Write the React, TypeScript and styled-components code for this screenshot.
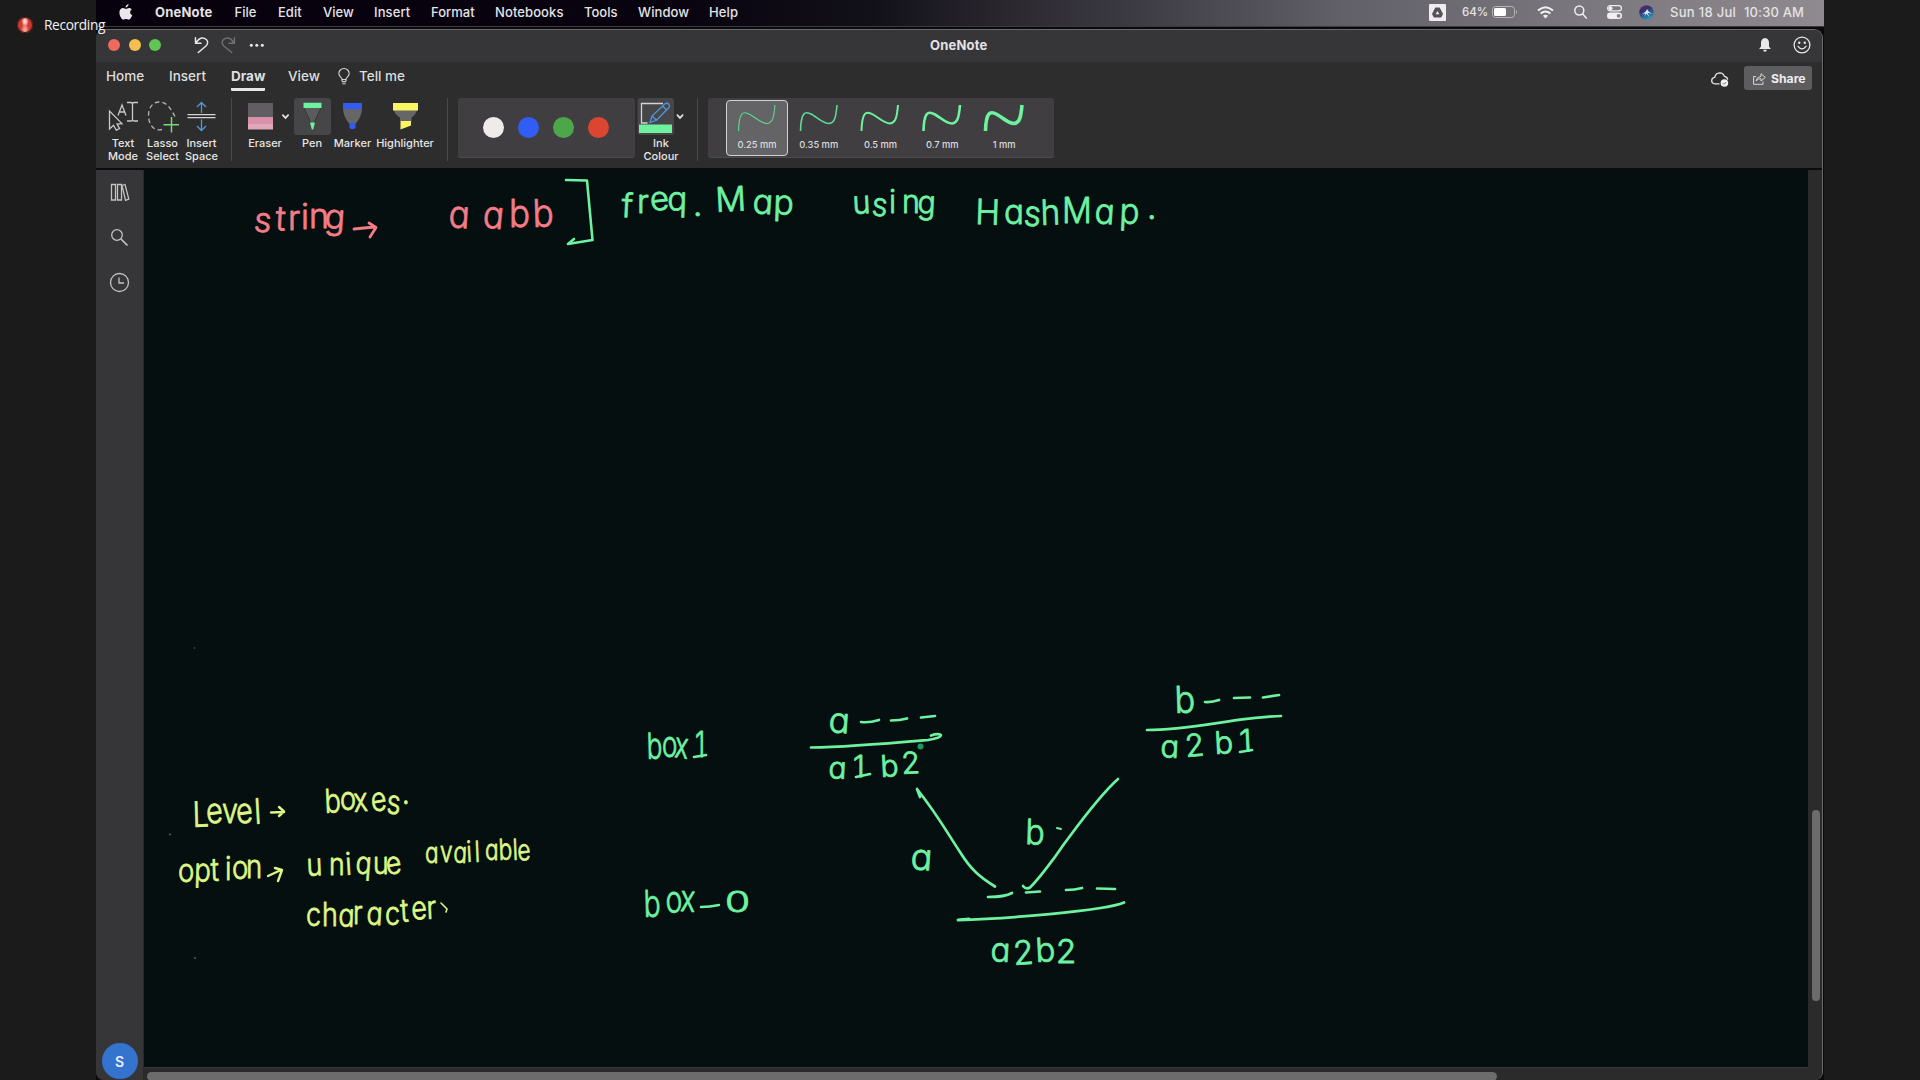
import React from "react";
import styled, { createGlobalStyle, css } from "styled-components";

const UI = `Inter, "Liberation Sans", sans-serif`;
const GREEN = "#6df2a2";
const RED = "#f57c86";
const YELLOW = "#dcf784";

const Global = createGlobalStyle`
  html, body { margin: 0; background: #1b1b1b; }
  *, *::before, *::after { box-sizing: border-box; }
`;

const Screen = styled.div`
  width: 1920px; height: 1080px; overflow: hidden;
  display: grid; grid-template-columns: 96px 1728px 96px;
  background: #1b1b1b; font-family: ${UI}; color: #e4e3e5;
`;
const Recording = styled.div`
  display: flex; align-items: center; gap: 10px; height: 20px;
  margin: 15px 0 0 16px; white-space: nowrap; position: relative; z-index: 2;
  font: 13.7px/18px "Open Sans", "Noto Sans", sans-serif; color: #f2f2f2;
`;
const RecordLabel = styled.span`margin: -1px 0 0 -1px; letter-spacing: -0.35px;`;
const RecordDot = styled.span`
  width: 16px; height: 16px; margin: 0 2px 0 1px; border-radius: 50%; flex: none;
  background: radial-gradient(ellipse at 50% 28%, #ffd3cd 0 10%, transparent 32%),
    radial-gradient(ellipse at 50% 80%, #f7a59c 0 8%, transparent 36%), #cf3a30;
  box-shadow: 0 0 0 1px #4a1b18 inset;
`;
const Desktop = styled.main`
  display: flex; flex-direction: column; height: 1080px; background: #0a090c;
`;
const MenuBar = styled.header`
  height: 26px; flex: none; display: flex; align-items: center;
  padding: 0 0 2px 22px; margin-bottom: 3px;
  background: linear-gradient(90deg, #06010d 0, #08030f 33%, #121019 45%, #2b2830 53%, #3c3a43 60%, #615f68 72%, #77747b 84%, #8f8a8f 100%);
  box-shadow: 0 1px 0 #3b3a3e;
`;
const Text = styled.span<{ $w: number; $ml?: number; $size?: number; $bold?: boolean; $ls?: number }>`
  display: block; flex: none; white-space: nowrap;
  width: ${p => p.$w}px; margin-left: ${p => p.$ml ?? 0}px;
  font-size: ${p => p.$size ?? 13}px; line-height: 18px;
  font-weight: ${p => (p.$bold ? 700 : 500)};
  letter-spacing: ${p => p.$ls ?? 0}px;
`;
const Glyph = styled.svg<{ $ml?: number; $mt?: number }>`
  display: block; flex: none; fill: none; overflow: visible;
  margin-left: ${p => p.$ml ?? 0}px; margin-top: ${p => p.$mt ?? 0}px;
`;
const Window = styled.section`
  flex: 1; min-height: 0; display: flex; flex-direction: column; width: 1727px;
  border: 1px solid #6b6a6d; border-width: 1px 1px 0 0; border-radius: 9px 9px 8px 8px;
  background: #2d2d2d; overflow: hidden;
`;
const TitleBar = styled.div`
  height: 32px; flex: none; display: grid; grid-template-columns: 1fr 58px 1fr; align-items: center;
  background: #363538; padding-bottom: 2px;
`;
const TitleSide = styled.div<{ $end?: boolean }>`
  display: flex; align-items: center;
  ${p => p.$end ? css`justify-content: flex-end; padding-right: 11px;` : css`padding-left: 12px;`}
`;
const Light = styled.span<{ $c: string }>`
  width: 12px; height: 12px; margin-right: 8.5px; border-radius: 50%; background: ${p => p.$c};
`;
const Tabs = styled.nav`
  height: 34px; flex: none; display: flex; align-items: flex-start; padding: 4px 10px 0 11px;
`;
const Tab = styled.div<{ $w: number; $ml?: number; $active?: boolean; $ls?: number }>`
  width: ${p => p.$w}px; margin-left: ${p => p.$ml ?? 0}px; height: 23px; padding-top: 1px; white-space: nowrap;
  font-size: 13.5px; line-height: 18px; letter-spacing: ${p => p.$ls ?? 0}px;
  font-weight: ${p => (p.$active ? 700 : 500)}; color: #dededf;
  ${p => p.$active && css`border-bottom: 3px solid #e8e8e8; border-radius: 1px; height: 25px;`}
`;
const Spacer = styled.div`flex: 1;`;
const Share = styled.button`
  width: 68px; height: 24px; margin-left: 15px; padding: 0 0 0 9px; border: 0; border-radius: 3px;
  display: flex; align-items: center; background: #5d5c5f; color: #ededee;
  font: 700 12.2px ${UI}; gap: 5px;
`;
const Ribbon = styled.div`
  height: 74px; flex: none; display: flex; align-items: flex-start; padding: 2px 0 0 7px;
  border-bottom: 2px solid #0b0b0c; 
`;
const Tool = styled.div<{ $w: number; $ml?: number }>`
  width: ${p => p.$w}px; margin-left: ${p => p.$ml ?? 0}px; flex: none;
  display: flex; flex-direction: column; align-items: center;
  font-size: 11px; font-weight: 500; line-height: 12.5px; text-align: center; white-space: pre; color: #e6e6e7;
`;
const ToolIcon = styled.div<{ $on?: boolean }>`
  height: 37px; margin-bottom: 2px; border-radius: 3px; display: flex; justify-content: center;
  background: ${p => (p.$on ? "#464548" : "transparent")};
`;
const Divider = styled.div<{ $ml: number }>`
  width: 1px; height: 63px; flex: none; margin-left: ${p => p.$ml}px; background: #4a4a4b;
`;
const Panel = styled.div<{ $w: number; $ml: number }>`
  width: ${p => p.$w}px; height: 60px; flex: none; margin-left: ${p => p.$ml}px;
  display: flex; align-items: center; border-radius: 3px; background: #403e41; border-bottom: 1px solid #4b4a4c;
`;
const Swatch = styled.span<{ $c: string }>`
  width: 21px; height: 21px; margin-right: 14px; border-radius: 50%; background: ${p => p.$c};
`;
const Nib = styled.div<{ $on?: boolean }>`
  width: 61.8px; height: 56px; display: flex; flex-direction: column; align-items: center;
  border-radius: 4px; border: 1.5px solid ${p => (p.$on ? "#d2d2d2" : "transparent")};
  background: ${p => (p.$on ? "#646366" : "transparent")};
  font-size: 9.3px; font-weight: 500; line-height: 14px; padding-top: 3px; color: #dcdcdd;
`;
const Body = styled.div`
  flex: 1; min-height: 0; display: grid; grid-template-columns: 48px 1664px 1fr;
`;
const Rail = styled.aside`
  display: flex; flex-direction: column; align-items: center; padding: 13px 0 2px; background: #363537;
  border-right: 1px solid #29292b;
`;
const Avatar = styled.div`
  width: 36px; height: 36px; border-radius: 50%; background: #3474cf; color: #eaf1fb;
  display: grid; place-items: center; font-size: 14px; font-weight: 600; margin-top: auto;
`;
const PageColumn = styled.div`display: flex; flex-direction: column; min-width: 0;`;
const Page = styled.div`height: 897px; background: #060f10; overflow: hidden;`;
const HTrack = styled.div`
  flex: 1; padding: 4px 0 0 3px; border-top: 1px solid #37383a; background: #2b2b2c; overflow: hidden;
`;
const HThumb = styled.div`width: 1350px; height: 9px; border-radius: 5px; background: #6c6c6c;`;
const VTrack = styled.div`padding: 640px 0 0 4px; background: #2b2b2c;`;
const VThumb = styled.div`width: 8px; height: 191px; border-radius: 4px; background: #6c6c6c;`;

const InkText = styled.text`
  font-family: ${UI}; font-weight: 300; font-feature-settings: "cv11"; stroke-width: 0.8px;
`;

/* x: left edge of every letter; sx: how far the hand narrows or widens the letters; r: tilt of every letter */
type Word = { t: string; x: number[]; y: number | number[]; s: number; c: string; sx?: number; r?: number[] };

const words: Word[] = [
  { t: "string", x: [253, 275, 288, 301, 309, 324], y: [231, 230, 230, 229, 228, 228], s: 34, c: RED, r: [6, 3, 0, 0, 0, 4] },
  { t: "aabb", x: [448, 482, 509, 533], y: 227, s: 38, c: RED, sx: 0.92, r: [4, 6, 0, -2] },
  { t: "freq.", x: [621, 637, 651, 667, 693], y: [217, 213, 211, 210, 216], s: 33, c: GREEN, r: [3, 0, -6, 2, 0] },
  { t: "Map", x: [716, 752, 773], y: [212, 213, 214], s: 34, c: GREEN, r: [-3, 4, 2] },
  { t: "using", x: [853, 871, 889, 902, 917], y: [214, 215, 213, 213, 213], s: 32, c: GREEN, sx: 0.95, r: [-3, 6, 0, 0, 3] },
  { t: "HashMap.", x: [975, 1004, 1023, 1041, 1062, 1094, 1119, 1147], y: [224, 224, 225, 225, 223, 223, 223, 219], s: 35, c: GREEN, sx: 0.95, r: [2, 0, 5, -2, 0, 4, 3, 0] },
  { t: "Level", x: [193, 207, 222, 237, 255], y: [827, 824, 823, 824, 824], s: 35, c: YELLOW, sx: 0.82, r: [-2, -6, 0, -6, -4] },
  { t: "boxes.", x: [325, 340, 354, 372, 386, 402], y: [813, 810, 812, 812, 813, 804], s: 33, c: YELLOW, sx: 0.82, r: [-3, 0, -4, -8, 5, 0] },
  { t: "option", x: [178, 194, 211, 225, 232, 246], y: [882, 881, 881, 880, 879, 878], s: 32, c: YELLOW, sx: 0.86, r: [0, 2, -2, 0, 0, 0] },
  { t: "unique", x: [307, 329, 346, 355, 373, 387], y: [876, 875, 875, 873, 874, 875], s: 31, c: YELLOW, sx: 0.86, r: [-3, 0, -4, 5, 0, -8] },
  { t: "available", x: [425, 440, 453, 467, 475, 485, 499, 513, 518], y: [863, 862, 862, 862, 862, 860, 860, 860, 861], s: 29, c: YELLOW, sx: 0.78, r: [0, 0, 4, -4, -3, 0, -3, -3, -5] },
  { t: "character", x: [306, 322, 338, 353, 366, 385, 401, 412, 427], y: [926, 926, 926, 924, 924, 925, 922, 920, 919], s: 32, c: YELLOW, sx: 0.84, r: [0, 0, 3, 0, 4, 0, -4, -5, -3] },
  { t: "box1", x: [647, 662, 674, 695], y: [759, 757, 757, 757], s: 36, c: GREEN, sx: 0.72, r: [-2, 0, 6, 0] },
  { t: "a", x: [828], y: 732, s: 35, c: GREEN, r: [4] },
  { t: "a1b2", x: [828, 853, 881, 902], y: [778, 777, 777, 774], s: 30, c: GREEN, r: [3, 0, -3, -3] },
  { t: "a", x: [910], y: 869, s: 36, c: GREEN, r: [4] },
  { t: "box", x: [644, 666, 680], y: [917, 913, 911], s: 37, c: GREEN, sx: 0.76, r: [-2, -3, 3] },
  { t: "0", x: [725], y: 912.5, s: 28, c: GREEN, sx: 1.45 },
  { t: "b", x: [1175], y: 713, s: 37, c: GREEN, sx: 0.92, r: [-2] },
  { t: "a2b1", x: [1160, 1186, 1215, 1240], y: [757, 757, 754, 752], s: 31, c: GREEN, r: [3, -5, -3, -3] },
  { t: "b", x: [1025], y: 844, s: 35, c: GREEN, sx: 0.92, r: [2] },
  { t: "a2b2", x: [990, 1014, 1036, 1056], y: [961, 965, 962, 963], s: 33, c: GREEN, r: [3, -4, -3, 0] },
];

const strokes: { d: string; c: string; w?: number }[] = [
  { d: "M354 229 L374 227 M369 223 L376 227.5 L370 237", c: RED, w: 2.8 },
  { d: "M566 180 L587 180.5 L592.5 240 L568 244 L574 239", c: GREEN, w: 2.6 },
  { d: "M271 812.5 L284 812 M279 807 L284 811.5 L279 816", c: YELLOW, w: 2.4 },
  { d: "M268 876 L281 870 M275 868 L282 870 L278 881", c: YELLOW, w: 2.4 },
  { d: "M441 903 L447 909 L446 912", c: YELLOW, w: 1.6 },
  { d: "M694 757 L706 755 M856 777 L870 774 M1240 752 L1252 750", c: GREEN },
  { d: "M861 722 Q869 723 879 720 M891 720.5 Q900 720.5 907 718.5 M921 717.5 L935 716", c: GREEN },
  { d: "M811 747.5 C850 747 905 742 928 740 Q941 738 941 735 Q938 733 931 735.5", c: GREEN },
  { d: "M917 789 C937 814 948 834 960 852 C971 870 981 878 995 886.5 M917 789 L920 797", c: GREEN },
  { d: "M1118 779 C1098 797 1076 828 1064 844 C1052 862 1036 882 1030 887.5 Q1026 890 1023 886", c: GREEN },
  { d: "M1205 702 Q1212 702.5 1219 700 M1234 698 L1250 697.5 M1263 697.5 L1279 695", c: GREEN },
  { d: "M1147 730 C1190 730 1240 717 1281 716", c: GREEN },
  { d: "M1057 828 L1061 829", c: GREEN, w: 2 },
  { d: "M988 897 Q1005 897 1012 893 M1026 892.5 L1040 891.5 M1066 890 Q1075 890 1082 888 M1097 888.5 L1115 889", c: GREEN },
  { d: "M958 920 C1000 919 1105 911 1124 902.5 M958 920 L969 919", c: GREEN, w: 2.8 },
  { d: "M701 907 Q710 907 719 905", c: GREEN, w: 2.5 },
];

const Ink = () => (
  <Glyph width={1664} height={897} viewBox="144 170 1664 897" strokeLinecap="round" strokeLinejoin="round">
    {strokes.map((s, i) => <path key={i} d={s.d} stroke={s.c} strokeWidth={s.w ?? 2.7} />)}
    {words.map(({ t, x, y, s, c, sx = 1, r }, i) => (
      <InkText
        key={i}
        transform={`scale(${sx} 1)`}
        x={x.map(v => (v / sx).toFixed(2)).join(" ")}
        y={Array.isArray(y) ? y.join(" ") : y}
        rotate={r?.join(" ")}
        fontSize={s}
        fill={c}
        stroke={c}
      >
        {t}
      </InkText>
    ))}
    <circle cx={920.5} cy={746.5} r={3} fill="#159a5f" />
    <g fill="#536050"><circle cx={170} cy={834.5} r={1} /><circle cx={195} cy={958} r={1} /><circle cx={194.5} cy={648} r={0.8} /></g>
  </Glyph>
);

const Chevron = ({ x }: { x: number }) => (
  <path d={`M${x - 2.6} 115.2 l2.6 2.8 l2.6 -2.8`} stroke="#e4e4e4" strokeWidth={1.8} strokeLinecap="round" />
);

const menus: [string, number, number, number?][] = [
  ["File", 22, 21.5], ["Edit", 23, 21.5], ["View", 29, 22], ["Insert", 35, 22, 0.1], ["Format", 43, 22],
  ["Notebooks", 68, 21, 0.1], ["Tools", 33, 21], ["Window", 49, 21, 0.1], ["Help", 30, 22, 0.1],
];
const nibs: [string, number][] = [["0.25 mm", 1.1], ["0.35 mm", 1.6], ["0.5 mm", 2], ["0.7 mm", 2.6], ["1 mm", 3.6]];

export default function App() {
  return (
    <Screen>
      <Global />
      <Recording><RecordDot /><RecordLabel>Recording</RecordLabel></Recording>
      <Desktop>
        <MenuBar>
          <Glyph $ml={0.5} width={14} height={16} viewBox="0 0 14 16">
            <path fill="#e9e6ec" d="M9.6 0 C9.7 1.6 8.2 3.5 6.6 3.5 C6.5 1.8 8 .2 9.6 0 Z M12.7 5.4 C10.4 6.9 10.7 10 13.3 11.1 C12.5 13.4 11 15.7 9.6 15.7 C8.6 15.7 8.2 15 7 15 C5.8 15 5.3 15.7 4.4 15.7 C2.7 15.6 .4 12 .4 8.6 C.4 5.8 2.1 4.1 4 4.1 C5.2 4.1 6.2 4.9 7 4.9 C7.8 4.9 8.9 4 10.2 4 C11.2 4 12.1 4.6 12.7 5.4 Z" />
          </Glyph>
          <Text $w={58} $ml={22.5} $bold $ls={0.2}>OneNote</Text>
          {menus.map(([t, w, ml, ls]) => <Text key={t} $w={w} $ml={ml} $ls={ls}>{t}</Text>)}
          <Spacer />
          <Glyph width={17} height={17} viewBox="0 0 17 17">
            <rect width={17} height={17} rx={1} fill="#efedf0" />
            <path d="M6.3 3.5 H10.7 L14 10 L12.2 13.5 H4.8 L3 10 Z" fill="#55525a" />
            <path d="M8.5 7 L10.4 10.3 H6.6 Z" fill="#efedf0" />
          </Glyph>
          <Text $w={26} $ml={16} $size={11.5}>64%</Text>
          <Glyph $ml={4} width={26} height={12} viewBox="0 0 26 12">
            <rect x={.5} y={.5} width={22} height={11} rx={3} stroke="#b6b2b8" />
            <rect x={2} y={2} width={12} height={8} rx={1.5} fill="#fff" /><path d="M24 4 Q26 6 24 8 Z" fill="#b6b2b8" />
          </Glyph>
          <Glyph $ml={19} width={17} height={13} viewBox="0 0 17 13" stroke="#f3f1f4" strokeWidth={2}>
            <path d="M1 4.6 Q8.5 -2 16 4.6 M3.6 7.6 Q8.5 3.4 13.4 7.6" /><path d="M8.5 12.5 L5.9 9.7 Q8.5 7.7 11.1 9.7 Z" fill="#f3f1f4" stroke="none" />
          </Glyph>
          <Glyph $ml={20} width={13} height={14} viewBox="0 0 13 14" stroke="#f0eef1" strokeWidth={1.5} strokeLinecap="round">
            <circle cx={5.3} cy={5.5} r={4.5} /><path d="M8.7 9 L12.3 13" />
          </Glyph>
          <Glyph $ml={20} width={15} height={14} viewBox="0 0 15 14">
            <rect x={.6} y={.6} width={13.8} height={5.2} rx={2.6} stroke="#f0eef1" strokeWidth={1.2} /><circle cx={3.5} cy={3.2} r={2} fill="#f0eef1" />
            <rect y={7.6} width={15} height={6.4} rx={3.2} fill="#f0eef1" /><circle cx={11.6} cy={10.8} r={1.9} fill="#85818a" />
          </Glyph>
          <Glyph $ml={17} width={15} height={15} viewBox="0 0 15 15">
            <defs><linearGradient id="siri" x1="0" y1="0" x2=".5" y2="1"><stop offset="0" stopColor="#6b2a72" /><stop offset=".4" stopColor="#3b2d6d" /><stop offset="1" stopColor="#2592b8" /></linearGradient></defs>
            <circle cx={7.5} cy={7.5} r={7.3} fill="url(#siri)" />
            <path d="M2.5 9 Q7 7.5 8 4 Q9 7 13 8.6 Q10 8.6 8.6 7.8 L10.4 12 L7.4 8.4 L5.5 11.5 L6.2 8.4 Z" fill="#dcecff" />
          </Glyph>
          <Text $w={66} $ml={16} $ls={.3}>Sun 18 Jul</Text>
          <Text $w={60} $ml={8} $ls={.15}>10:30 AM</Text>
          <Text $w={20}> </Text>
        </MenuBar>
        <Window>
          <TitleBar>
            <TitleSide>
              <Light $c="#ed6a5f" /><Light $c="#f5bf4f" /><Light $c="#61c554" />
              <Glyph $ml={24.5} width={70} height={16} viewBox="194 37 70 16" strokeLinecap="round" strokeLinejoin="round" strokeWidth={1.5}>
                <path stroke="#e8e8e8" d="M195.5 37.7 V43.3 H201 M195.8 43 C199 38 202 37.3 204.5 38.4 C208.3 40.3 208.6 43.5 206 46 L198.3 52.5" />
                <path stroke="#6f6e71" d="M234.4 37.7 V43.3 H229 M234 43 C231 38 228 37.3 225.3 38.4 C221.5 40.3 221.2 43.5 223.8 46 L231.8 52.5" />
                <g fill="#e8e8e8"><circle cx={251.3} cy={45.3} r={1.5} /><circle cx={256.8} cy={45.3} r={1.5} /><circle cx={262.3} cy={45.3} r={1.5} /></g>
              </Glyph>
            </TitleSide>
            <Text $w={59} $bold $ls={0.2}>OneNote</Text>
            <TitleSide $end>
              <Glyph width={12} height={14} viewBox="0 0 12 14"><path fill="#e8e8e8" d="M6 0 Q10 .4 10 5 V8.5 L11.6 10.5 V11 H.4 V10.5 L2 8.5 V5 Q2 .4 6 0 Z M4 11.8 H8 Q7.5 13.8 6 13.8 Q4.5 13.8 4 11.8 Z" /></Glyph>
              <Glyph $ml={22} width={18} height={18} viewBox="0 0 18 18" stroke="#e8e8e8" strokeWidth={1.3} strokeLinecap="round">
                <circle cx={9} cy={9} r={7.9} /><path d="M5 10.3 Q9 15.3 13 10.3" /><g fill="#e8e8e8" stroke="none"><circle cx={6.2} cy={6.8} r={1.2} /><circle cx={11.8} cy={6.8} r={1.2} /></g>
              </Glyph>
            </TitleSide>
          </TitleBar>
          <Tabs>
            <Tab $w={37} $ml={-1}>Home</Tab><Tab $w={37} $ml={26}>Insert</Tab>
            <Tab $w={34} $ml={25} $active>Draw</Tab><Tab $w={31} $ml={23}>View</Tab>
            <Glyph $ml={19} $mt={2} width={12} height={17} viewBox="0 0 12 17" stroke="#d6d6d7" strokeWidth={1.1}>
              <path d="M4 11.5 C4 9.5 .8 8.7 .8 5.6 A5.2 5.1 0 0 1 11.2 5.6 C11.2 8.7 8 9.5 8 11.5 Z M4 13.6 H8 M4.3 15.7 H7.7 M4 11.5 V13.6 M8 11.5 V13.6" />
            </Glyph>
            <Tab $w={45} $ml={9}>Tell me</Tab>
            <Spacer />
            <Glyph $mt={6} width={18} height={15} viewBox="0 0 18 15" stroke="#e8e8e8" strokeWidth={1.3}>
              <path d="M8.5 11.8 H4 Q.7 11.6 .7 8.5 Q.8 5.7 3.7 5.3 Q4.6 1 8.8 .8 Q12.2 .8 13.4 4.4 Q16.5 5 16.7 7.6" />
              <circle cx={13.4} cy={11} r={3.8} fill="#f2f2f2" stroke="none" /><path d="M11.8 11.1 L13 12.3 L15.2 10" stroke="#777" strokeWidth={1} />
            </Glyph>
            <Share>
              <svg width={13} height={13} viewBox="0 0 13 13" fill="none" stroke="#d8d8d9" strokeWidth={1}>
                <path d="M3 4.5 H.6 V12.3 H10 V9.5 M3 9 Q3.5 5 8 4.3 V1.7 L12.3 5.4 L8 9 V6.6 Q5 6.5 3 9 Z" />
              </svg>
              Share
            </Share>
          </Tabs>
          <Ribbon>
            <Tool $w={40}>
              <ToolIcon><Glyph width={40} height={37} viewBox="103 98 40 37" stroke="#c9c9ca" strokeWidth={1.3}>
                <path d="M109.5 111 V129 L113.5 125.3 L116.3 130.2 L119.6 128.5 L117 124 L122 123.6 Z" />
                <path d="M118 115.5 L122 105 L126 115.5 M119.3 112 H124.7" />
                <path d="M127 102.5 H131 Q132.5 102.5 132.5 104 V119.5 Q132.5 121 131 121 H127 M138 102.5 H134 Q132.5 102.5 132.5 104 M132.5 119.5 Q132.5 121 134 121 H138" />
              </Glyph></ToolIcon>{"Text\nMode"}
            </Tool>
            <Tool $w={39}>
              <ToolIcon><Glyph width={39} height={37} viewBox="143 98 39 37" strokeWidth={1.3}>
                <path stroke="#b5b5b6" strokeDasharray="4.5 3" d="M162 129.5 C153 132 148.5 123 148.5 116 C148.5 107 153 102 159.5 102 C167 102 171 109 175.5 117.5" />
                <path stroke="#78d67b" strokeWidth={1.5} d="M163.5 124.7 H179 M171.5 117 V132.5" />
              </Glyph></ToolIcon>{"Lasso\nSelect"}
            </Tool>
            <Tool $w={39}>
              <ToolIcon><Glyph width={39} height={37} viewBox="182 98 39 37" strokeWidth={1.3}>
                <path stroke="#d4d4d5" d="M187.5 114.6 H215.5 M187.5 117.7 H215.5" />
                <path stroke="#4f98dc" d="M201.5 113 V102.8 M197 107 L201.5 102.5 L206 107 M201.5 119.5 V130 M197 126 L201.5 130.5 L206 126" />
              </Glyph></ToolIcon>{"Insert\nSpace"}
            </Tool>
            <Divider $ml={10} />
            <Tool $w={50} $ml={8}>
              <ToolIcon><Glyph width={50} height={37} viewBox="240 98 50 37">
                <path d="M248 103 H273 V117 H248 Z" fill="#605e61" /><path d="M248 117 H273 V124 H248 Z" fill="#d891a9" /><path d="M248 124 H273 V129.5 H248 Z" fill="#dfa7b9" />
                <Chevron x={285.5} />
              </Glyph></ToolIcon>Eraser
            </Tool>
            <Tool $w={37} $ml={3.5}>
              <ToolIcon $on><Glyph width={37} height={37} viewBox="293.5 98 37 37">
                <path d="M303 108 H321 L314 122.5 H310 Z" fill="#5b5a5d" /><path d="M303.5 108 L310.5 123 M320.5 108 L313.5 123" stroke="#333" />
                <path d="M303 102.8 H321 V108 H303 Z M309.5 122.5 H314.5 L312.7 129.5 H311.3 Z" fill="#6ff29f" />
              </Glyph></ToolIcon>Pen
            </Tool>
            <Tool $w={42} $ml={1}>
              <ToolIcon><Glyph width={42} height={37} viewBox="331.5 98 42 37">
                <path d="M342.5 109 H361.5 Q361 117 355 124 H349 Q343 117 342.5 109 Z" fill="#666568" />
                <path d="M342.5 103 H361.5 V109 H342.5 Z" fill="#325af4" /><circle cx={352} cy={126} r={3.2} fill="#325af4" />
              </Glyph></ToolIcon>Marker
            </Tool>
            <Tool $w={60} $ml={1.5}>
              <ToolIcon><Glyph width={60} height={37} viewBox="375 98 60 37">
                <path d="M394 110 H417 Q416 115 411.5 117.5 V121 H400 V117.5 Q395 115 394 110 Z" fill="#666568" />
                <path d="M393 103 H418 V110.5 H393 Z M400.5 121 H411 V125.5 L400.5 129.5 Z" fill="#fbf564" />
              </Glyph></ToolIcon>Highlighter
            </Tool>
            <Divider $ml={12} />
            <Panel $w={177} $ml={10}>
              <Spacer />
              <Swatch $c="#eeebea" /><Swatch $c="#315cf5" /><Swatch $c="#4ea64a" /><Swatch $c="#dc4531" />
              <Text $w={12}> </Text>
            </Panel>
            <Tool $w={50} $ml={1}>
              <ToolIcon><Glyph width={50} height={37} viewBox="636 98 50 37">
                <rect x={637.5} y={98} width={36.5} height={37} rx={3} fill="#464548" />
                <path d="M647.5 123 H641.5 V103.5 H663" stroke="#d5d5d5" strokeWidth={1.3} />
                <path d="M650 122.5 L652 116 L665 103.7 Q667.5 102.5 669 104.3 Q670 106.2 669 107.5 L656.5 120.3 Z M652 116 L656.5 120.3 M662.5 106 L666.7 110" stroke="#4f98dc" strokeWidth={1.3} />
                <path d="M639 124.5 H672 V133 H639 Z" fill="#6ff29f" />
                <Chevron x={680} />
              </Glyph></ToolIcon>{"Ink\nColour"}
            </Tool>
            <Divider $ml={11} />
            <Panel $w={346} $ml={10}>
              <Text $w={18}> </Text>
              {nibs.map(([t, w], i) => (
                <Nib key={t} $on={i === 0}>
                  <Glyph width={40} height={34} viewBox="0 0 40 34">
                    <path d="M1.5 27 C2 8 6 6.5 13 10.5 C20 14.5 24 19.5 30 19.5 C36 19 37 12 38 1" stroke={i < 2 ? "#5fd896" : "#6ff29f"} strokeWidth={w} />
                  </Glyph>{t}
                </Nib>
              ))}
            </Panel>
          </Ribbon>
          <Body>
            <Rail>
              <Glyph width={20} height={106} viewBox="110 183 20 106" stroke="#c3c3c4" strokeWidth={1.3}>
                <path d="M111.5 184.5 H115.5 V200 H111.5 Z M117.5 184.5 H121.5 V200 H117.5 Z M122 185.5 L125 184.5 L128.8 199 L125.5 200.3 Z" />
                <circle cx={117} cy={235} r={5.3} /><path d="M121 239 L127.5 245.5" strokeWidth={1.7} />
                <circle cx={119.5} cy={282.5} r={9} /><path d="M119 277.5 V283 H124" />
              </Glyph>
              <Avatar>S</Avatar>
            </Rail>
            <PageColumn><Page><Ink /></Page><HTrack><HThumb /></HTrack></PageColumn>
            <VTrack><VThumb /></VTrack>
          </Body>
        </Window>
      </Desktop>
    </Screen>
  );
}
